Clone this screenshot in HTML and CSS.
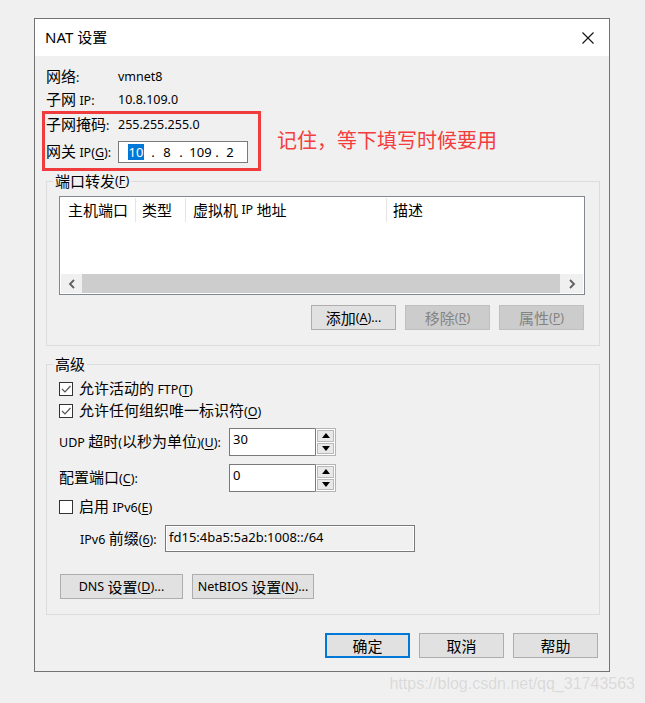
FILE: index.html
```html
<!DOCTYPE html>
<html lang="zh-CN">
<head>
<meta charset="utf-8">
<title>NAT 设置</title>
<link rel="stylesheet" href="styles.css">
</head>
<body>
<div class="page">
  <div class="dialog">
    <div class="titlebar">
      <span class="title">NAT 设置</span>
      <svg class="close" width="12" height="12" viewBox="0 0 12 12"><path d="M0.5 0.5 L11.5 11.5 M11.5 0.5 L0.5 11.5" stroke="#111" stroke-width="1.1" fill="none"/></svg>
    </div>
    <div class="content">
      <div class="info">
        <span class="lbl">网络<span class="en">:</span></span><span class="val en">vmnet8</span>
        <span class="lbl">子网 <span class="en">IP:</span></span><span class="val en">10.8.109.0</span>
        <span class="lbl">子网掩码<span class="en">:</span></span><span class="val en">255.255.255.0</span>
        <span class="lbl">网关 <span class="en">IP(<u>G</u>):</span></span>
        <div class="ipbox en">
          <span class="ip-f f1"><span class="sel">10</span></span>
          <span class="ip-d d1">.</span>
          <span class="ip-f f2">8</span>
          <span class="ip-d d2">.</span>
          <span class="ip-f f3">109</span>
          <span class="ip-d d3">.</span>
          <span class="ip-f f4">2</span>
        </div>
      </div>

      <fieldset class="group group-ports">
        <legend>端口转发<span class="en">(<u>F</u>)</span></legend>
        <div class="listview">
          <div class="lv-header">
            <span class="col c1">主机端口</span>
            <span class="col c2">类型</span>
            <span class="col c3">虚拟机&nbsp;<span class="en">IP</span>&nbsp;地址</span>
            <span class="col c4">描述</span>
          </div>
          <div class="lv-body"></div>
          <div class="hscroll">
            <span class="sb-btn sb-left"><svg width="8" height="10" viewBox="0 0 8 10"><path d="M6 1 L2 5 L6 9" stroke="#5f5f5f" stroke-width="1.8" fill="none"/></svg></span>
            <span class="sb-thumb"></span>
            <span class="sb-btn sb-right"><svg width="8" height="10" viewBox="0 0 8 10"><path d="M2 1 L6 5 L2 9" stroke="#5f5f5f" stroke-width="1.8" fill="none"/></svg></span>
          </div>
        </div>
        <div class="btn-row">
          <span class="btn w85">添加<span class="en">(<u>A</u>)...</span></span>
          <span class="btn w85 disabled">移除<span class="en">(<u>R</u>)</span></span>
          <span class="btn w85 disabled">属性<span class="en">(<u>P</u>)</span></span>
        </div>
      </fieldset>

      <fieldset class="group group-adv">
        <legend>高级</legend>
        <div class="check-row">
          <span class="checkbox"><svg width="12" height="12" viewBox="0 0 12 12"><path d="M2 6 L5 9 L10.5 3" stroke="#555" stroke-width="1.2" fill="none"/></svg></span>
          <span>允许活动的 <span class="en">FTP(<u>T</u>)</span></span>
        </div>
        <div class="check-row">
          <span class="checkbox"><svg width="12" height="12" viewBox="0 0 12 12"><path d="M2 6 L5 9 L10.5 3" stroke="#555" stroke-width="1.2" fill="none"/></svg></span>
          <span>允许任何组织唯一标识符<span class="en">(<u>O</u>)</span></span>
        </div>
        <div class="spin-row spin-udp">
          <span class="spin-lbl"><span class="en">UDP</span> 超时<span class="en">(</span>以秒为单位<span class="en">)(<u>U</u>):</span></span>
          <div class="spin">
            <span class="spin-field en">30</span>
            <span class="spin-btns">
              <span class="spin-btn"><svg width="8" height="5" viewBox="0 0 8 5"><polygon points="0,5 4,0 8,5" fill="#000"/></svg></span>
              <span class="spin-btn"><svg width="8" height="5" viewBox="0 0 8 5"><polygon points="0,0 8,0 4,5" fill="#000"/></svg></span>
            </span>
          </div>
        </div>
        <div class="spin-row spin-port">
          <span class="spin-lbl">配置端口<span class="en">(<u>C</u>):</span></span>
          <div class="spin">
            <span class="spin-field en">0</span>
            <span class="spin-btns">
              <span class="spin-btn"><svg width="8" height="5" viewBox="0 0 8 5"><polygon points="0,5 4,0 8,5" fill="#000"/></svg></span>
              <span class="spin-btn"><svg width="8" height="5" viewBox="0 0 8 5"><polygon points="0,0 8,0 4,5" fill="#000"/></svg></span>
            </span>
          </div>
        </div>
        <div class="check-row check-ipv6">
          <span class="checkbox"></span>
          <span>启用 <span class="en">IPv6(<u>E</u>)</span></span>
        </div>
        <div class="prefix-row">
          <span class="prefix-lbl"><span class="en">IPv6</span> 前缀<span class="en">(<u>6</u>):</span></span>
          <span class="prefix-field en">fd15:4ba5:5a2b:1008::/64</span>
        </div>
        <div class="btn-row2">
          <span class="btn w123"><span class="en">DNS</span>&nbsp;设置<span class="en">(<u>D</u>)...</span></span>
          <span class="btn w122"><span class="en">NetBIOS</span>&nbsp;设置<span class="en">(<u>N</u>)...</span></span>
        </div>
      </fieldset>

      <div class="dialog-buttons">
        <span class="btn w85 default">确定</span>
        <span class="btn w85">取消</span>
        <span class="btn w85">帮助</span>
      </div>
    </div>
    <div class="annot-box"></div>
    <div class="annot-text">记住，等下填写时候要用</div>
  </div>
  <div class="watermark">https://blog.csdn.net/qq_31743563</div>
</div>
</body>
</html>
```

FILE: styles.css
```css
html, body {
  margin: 0;
  padding: 0;
  background: #f0f0f0;
}
body {
  font-family: "Noto Sans CJK SC", "Noto Sans", sans-serif;
  font-size: 15px;
  color: #000;
}
u { text-decoration: underline; text-underline-offset: 2px; }

.en {
  font-family: "Noto Sans", "Noto Sans CJK SC", sans-serif;
  font-size: 12.5px;
}

.page {
  padding: 18px 0 0 34px;
  width: 645px;
  box-sizing: border-box;
}

.dialog {
  position: relative;
  width: 576px;
  box-sizing: border-box;
  border: 1px solid #737373;
  background: #f0f0f0;
}

.titlebar {
  height: 37px;
  background: #fff;
  display: flex;
  align-items: center;
  padding-left: 10px;
}
.title {
  font-family: "Noto Sans", "Noto Sans CJK SC", sans-serif;
  font-size: 15px;
  line-height: 20px;
  margin-top: -2px;
}
.close {
  margin-left: auto;
  margin-right: 15px;
  display: block;
}

.content {
  padding: 10px 9px 13px 11px;
}

/* info rows */
.info {
  display: grid;
  grid-template-columns: 72px 1fr;
  grid-template-rows: 22px 24px 25px 30px;
  align-items: center;
  line-height: 20px;
  white-space: nowrap;
}
.ipbox {
  width: 130px;
  height: 22px;
  box-sizing: border-box;
  border: 1px solid #7a7a7a;
  background: #fff;
  display: flex;
  align-items: center;
  padding-left: 7px;
  line-height: 16px;
  font-size: 13px;
}
.ip-f, .ip-d {
  display: flex;
  justify-content: center;
}
.f1 { width: 20px; }
.d1 { width: 14px; }
.f2 { width: 14px; }
.d2 { width: 14px; }
.f3 { width: 25px; }
.d3 { width: 8px; }
.f4 { width: 18px; }
.sel {
  background: #0078d7;
  color: #fff;
  padding: 0 1px;
}

/* group boxes */
.group {
  margin: 0;
  min-width: 0;
  border: 1px solid #dcdcdc;
  padding: 0;
}
.group legend {
  margin-left: -6px;
  padding: 0 2px;
  height: 18px;
  line-height: 18px;
  display: flex;
  align-items: center;
  white-space: nowrap;
}
.group-ports {
  margin-top: 5px;
  padding: 6px 14px 15px 12px;
}
.group-adv {
  margin-top: 9px;
  padding: 5px 14px 15px 12px;
}

/* list view */
.listview {
  height: 99px;
  box-sizing: border-box;
  border: 1px solid #828790;
  background: #fff;
  padding: 1px;
  display: flex;
  flex-direction: column;
}
.lv-header {
  height: 24px;
  display: flex;
  line-height: 20px;
  white-space: nowrap;
}
.col {
  box-sizing: border-box;
  padding-left: 7px;
  display: flex;
  align-items: center;
}
.c1 { width: 75px; border-right: 1px solid #e5e5e5; }
.c2 { width: 50px; border-right: 1px solid #e5e5e5; padding-left: 6px; }
.c3 { width: 201px; border-right: 1px solid #e5e5e5; }
.c4 { flex: 1; padding-left: 6px; }
.lv-body { flex: 1; }
.hscroll {
  height: 19px;
  display: flex;
}
.sb-btn {
  background: #f0f0f0;
  display: flex;
  align-items: center;
  justify-content: center;
}
.sb-left { width: 21px; }
.sb-right { width: 23px; }
.sb-thumb { flex: 1; background: #cdcdcd; }

/* buttons */
.btn {
  height: 25px;
  box-sizing: border-box;
  border: 1px solid #adadad;
  background: #e1e1e1;
  display: flex;
  align-items: center;
  justify-content: center;
  line-height: 20px;
  white-space: nowrap;
}
.btn.disabled {
  background: #cccccc;
  border-color: #bfbfbf;
  color: #838383;
}
.btn.default {
  border: 2px solid #0078d7;
}
.w85 { width: 85px; }
.w123 { width: 123px; }
.w122 { width: 122px; }

.btn-row {
  margin-top: 10px;
  margin-right: 1px;
  display: flex;
  justify-content: flex-end;
  gap: 9px;
}

/* advanced */
.check-row {
  height: 22px;
  display: flex;
  align-items: center;
  gap: 6px;
  line-height: 20px;
  white-space: nowrap;
}
.checkbox {
  width: 14px;
  height: 14px;
  box-sizing: border-box;
  border: 1px solid #333;
  background: #fff;
  display: flex;
  align-items: center;
  justify-content: center;
}
.check-ipv6 { margin-top: 4px; }

.spin-row {
  display: flex;
  align-items: center;
  height: 28px;
  line-height: 20px;
  white-space: nowrap;
}
.spin-udp { margin-top: 6px; }
.spin-port { margin-top: 8px; }
.spin-lbl { width: 170px; flex: none; }
.spin {
  width: 107px;
  height: 28px;
  display: flex;
}
.spin-field {
  flex: 1;
  box-sizing: border-box;
  border: 1px solid #7a7a7a;
  border-right: none;
  background: #fff;
  padding: 0 3px;
  line-height: 20px;
  font-size: 13px;
}
.spin-btns {
  width: 21px;
  box-sizing: border-box;
  border: 1px solid #b4b4b4;
  border-left: 1px solid #7a7a7a;
  background: #fff;
  padding: 1px;
  display: flex;
  flex-direction: column;
  gap: 1px;
}
.spin-btn {
  flex: 1;
  background: #e8e8e8;
  border: 1px solid #b9b9b9;
  display: flex;
  align-items: center;
  justify-content: center;
}

.prefix-row {
  margin-top: 7px;
  display: flex;
  align-items: center;
  height: 27px;
  padding-left: 21px;
  line-height: 20px;
  white-space: nowrap;
}
.prefix-lbl { width: 85px; flex: none; }
.prefix-field {
  width: 250px;
  height: 27px;
  box-sizing: border-box;
  border: 1px solid #7a7a7a;
  box-shadow: inset 0 0 0 1px #fff;
  background: #f0f0f0;
  padding: 1px 3px 0;
  line-height: 20px;
  font-size: 13px;
}

.btn-row2 {
  margin-top: 22px;
  margin-left: 1px;
  display: flex;
  gap: 9px;
}

.dialog-buttons {
  margin-top: 18px;
  margin-right: 2px;
  display: flex;
  justify-content: flex-end;
  gap: 9px;
}

/* annotation overlays */
.annot-box {
  position: absolute;
  left: 7px;
  top: 92px;
  width: 219px;
  height: 60px;
  box-sizing: border-box;
  border: 3px solid #f03c3c;
}
.annot-text {
  position: absolute;
  left: 242px;
  top: 108px;
  font-size: 20px;
  line-height: 26px;
  color: #f43d3d;
  white-space: nowrap;
}

.watermark {
  margin-top: 2px;
  padding-right: 10px;
  text-align: right;
  font-family: "Liberation Sans", Arial, sans-serif;
  font-size: 16px;
  line-height: 20px;
  color: #d9d9d9;
  text-shadow: 0 0 1px #fafafa;
}
```
